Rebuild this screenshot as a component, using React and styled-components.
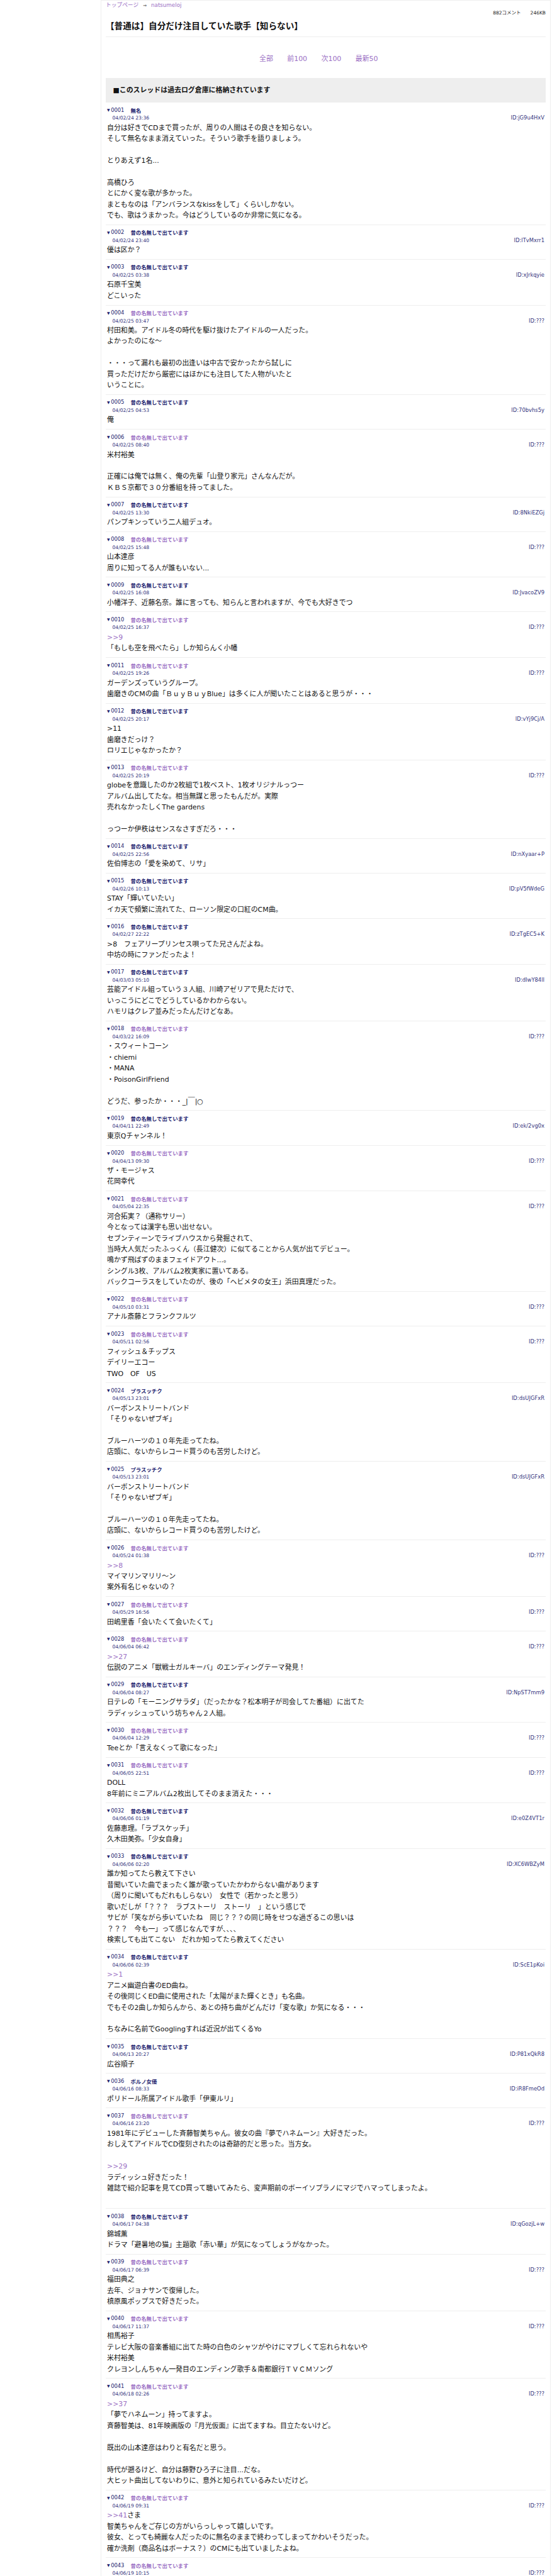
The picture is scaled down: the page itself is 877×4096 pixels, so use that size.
import React from 'react';
import styled, { createGlobalStyle } from 'styled-components';

const Global = createGlobalStyle`
  html, body {
    margin: 0;
    padding: 0;
    background: #fff;
  }
  body {
    font-family: "DejaVu Sans", "Noto Sans CJK JP", sans-serif;
    color: #111;
  }
`

const Clip = styled.div`
  height: 4096px;
  overflow: hidden;
`

const Page = styled.div`
  box-sizing: border-box;
  width: 715px;
  margin-left: 160px;
  padding: 0 7px;
  border: 1px solid #eee;
  border-bottom: none;
`

const Crumbs = styled.div`
  height: 14px;
  font-size: 8.73px;
  line-height: 14px;
  color: #333;
`

const Crumb = styled.a`
  color: #9b6fc4;
  text-decoration: none;
`

const Arrow = styled.span`
  margin: 0 7px;
  font-size: 7px;
`

const Meta = styled.div`
  display: flex;
  justify-content: flex-end;
  gap: 15px;
  font-size: 7.5px;
  line-height: 12px;
  color: #222;
`

const Title = styled.h1`
  margin: 0;
  padding: 6px 0 9px 0;
  font-size: 13.64px;
  line-height: 16px;
  font-weight: bold;
  color: #111;
  border-bottom: 1px solid #eee;
`

const Nav = styled.nav`
  display: flex;
  justify-content: center;
  height: 65px;
  align-items: center;
  font-size: 10.91px;
`

const NavLink = styled.a`
  margin-right: 22.5px;
  color: #9b6fc4;
  text-decoration: none;
`

const Banner = styled.div`
  box-sizing: border-box;
  height: 39px;
  padding-left: 11.5px;
  background: #eee;
  font-size: 10.91px;
  font-weight: bold;
  line-height: 39px;
  color: #111;
`

const PostBox = styled.article`
  padding: 5px 2px 5.2px;
  border-bottom: 1px solid #eee;
`

const PostHead = styled.div`
  display: flex;
  align-items: center;
  height: 13px;
  font-size: 8.4px;
  color: #1d1d6e;
`

const Marker = styled.span`
  font-size: 6px;
  margin-right: 1.5px;
`

const PostNo = styled.span`
  margin-right: 10px;
`

const Name = styled.span`
  font-weight: bold;
  color: ${(p) => (p.$mail ? '#9b6fc4' : '#1d1d6e')};
`

const PostMeta = styled.div`
  display: flex;
  justify-content: space-between;
  height: 13.5px;
  padding-left: 8.5px;
  line-height: 13.5px;
  color: #33337d;
`

const PostDate = styled.span`
  font-size: 7.64px;
`

const PostId = styled.span`
  font-size: 8.4px;
`

const Body = styled.div`
  font-size: 10.91px;
  line-height: 17.46px;
`

const Line = styled.div`
  min-height: 17.46px;
  white-space: pre;
`

const Anchor = styled.a`
  color: #9b6fc4;
  text-decoration: none;
`

const NANASHI = '昔の名無しで出ています'

const posts = [
  ['無名', 0, '04/02/24 23:36', 'jG9u4HxV', ['自分は好きでCDまで買ったが、周りの人間はその良さを知らない。', 'そして無名なまま消えていった。そういう歌手を語りましょう。', '', 'とりあえず1名...', '', '高橋ひろ', 'とにかく変な歌が多かった。', 'まともなのは「アンバランスなkissをして」くらいしかない。', 'でも、歌はうまかった。今はどうしているのか非常に気になる。']],
  [NANASHI, 0, '04/02/24 23:40', 'lTvMxrr1', ['優は区か？']],
  [NANASHI, 0, '04/02/25 03:38', 'xJrkqyie', ['石原千宝美', 'どこいった']],
  [NANASHI, 1, '04/02/25 03:47', '???', ['村田和美。アイドル冬の時代を駆け抜けたアイドルの一人だった。', 'よかったのにな～', '', '・・・って漏れも最初の出逢いは中古で安かったから試しに', '買っただけだから厳密にはほかにも注目してた人物がいたと', 'いうことに。']],
  [NANASHI, 0, '04/02/25 04:53', '70bvhs5y', ['俺']],
  [NANASHI, 1, '04/02/25 08:40', '???', ['米村裕美', '', '正確には俺では無く、俺の先輩「山登り家元」さんなんだが。', 'ＫＢＳ京都で３０分番組を持ってました。']],
  [NANASHI, 0, '04/02/25 13:30', '8NkiEZGj', ['パンプキンっていう二人組デュオ。']],
  [NANASHI, 1, '04/02/25 15:48', '???', ['山本達彦', '周りに知ってる人が誰もいない...']],
  [NANASHI, 0, '04/02/25 16:08', 'JvacoZV9', ['小幡洋子、近藤名奈。誰に言っても、知らんと言われますが、今でも大好きでつ']],
  [NANASHI, 1, '04/02/25 16:37', '???', ['>>9', '「もしも空を飛べたら」しか知らんく小幡']],
  [NANASHI, 1, '04/02/25 19:26', '???', ['ガーデンズっていうグループ。', '歯磨きのCMの曲「ＢｕｙＢｕｙBlue」は多くに人が聞いたことはあると思うが・・・']],
  [NANASHI, 0, '04/02/25 20:17', 'vYj9Cj/A', ['>11', '歯磨きだっけ？', 'ロリエじゃなかったか？']],
  [NANASHI, 1, '04/02/25 20:19', '???', ['globeを意識したのか2枚組で1枚ベスト、1枚オリジナルっつー', 'アルバム出してたな。相当無謀と思ったもんだが。実際', '売れなかったしくThe gardens', '', 'っつーか伊秩はセンスなさすぎだろ・・・']],
  [NANASHI, 0, '04/02/25 22:56', 'nXyaar+P', ['佐伯博志の「愛を染めて、リサ」']],
  [NANASHI, 0, '04/02/26 10:13', 'pV5fWdeG', ['STAY「輝いていたい」', 'イカ天で頻繁に流れてた、ローソン限定の口紅のCM曲。']],
  [NANASHI, 0, '04/02/27 22:22', 'zTgEC5+K', ['>8　フェアリープリンセス唄ってた兄さんだよね。', '中坊の時にファンだったよ！']],
  [NANASHI, 0, '04/03/03 05:10', 'dIwY84lI', ['芸能アイドル組っていう３人組、川崎アゼリアで見ただけで、', 'いっこうにどこでどうしているかわからない。', 'ハモリはクレア並みだったんだけどなあ。']],
  [NANASHI, 1, '04/03/22 16:09', '???', ['・スウィートコーン', '・chiemi', '・MANA', '・PoisonGirlFriend', '', 'どうだ、参ったか・・・_|￣|○']],
  [NANASHI, 0, '04/04/11 22:49', 'ek/2vg0x', ['東京Qチャンネル！']],
  [NANASHI, 1, '04/04/13 09:30', '???', ['ザ・モージャス', '花岡幸代']],
  [NANASHI, 1, '04/05/04 22:35', '???', ['河合拓実？（通称サリー）', '今となっては漢字も思い出せない。', 'セブンティーンでライブハウスから発掘されて、', '当時大人気だったふっくん（長江健次）に似てることから人気が出てデビュー。', '鳴かず飛ばずのままフェイドアウト...。', 'シングル3枚、アルバム2枚実家に置いてある。', 'バックコーラスをしていたのが、後の「ヘビメタの女王」浜田真理だった。']],
  [NANASHI, 1, '04/05/10 03:31', '???', ['アナル斎藤とフランクフルツ']],
  [NANASHI, 1, '04/05/11 02:56', '???', ['フィッシュ＆チップス', 'デイリーエコー', 'TWO　OF　US']],
  ['プラスッチク', 0, '04/05/13 23:01', 'dsUJGFxR', ['バーボンストリートバンド', '「そりゃないぜブギ」', '', 'ブルーハーツの１０年先走ってたね。', '店頭に、ないからレコード買うのも苦労したけど。']],
  ['プラスッチク', 0, '04/05/13 23:01', 'dsUJGFxR', ['バーボンストリートバンド', '「そりゃないぜブギ」', '', 'ブルーハーツの１０年先走ってたね。', '店頭に、ないからレコード買うのも苦労したけど。']],
  [NANASHI, 1, '04/05/24 01:38', '???', ['>>8', 'マイマリンマリリ～ン', '案外有名じゃないの？']],
  [NANASHI, 1, '04/05/29 16:56', '???', ['田嶋里香「会いたくて会いたくて」']],
  [NANASHI, 1, '04/06/04 06:42', '???', ['>>27', '伝説のアニメ「獣戦士ガルキーバ」のエンディングテーマ発見！']],
  [NANASHI, 0, '04/06/04 08:27', 'NpST7mm9', ['日テレの「モーニングサラダ」（だったかな？松本明子が司会してた番組）に出てた', 'ラディッシュっていう坊ちゃん２人組。']],
  [NANASHI, 1, '04/06/04 12:29', '???', ['Teeとか「言えなくって歌になった」']],
  [NANASHI, 1, '04/06/05 22:51', '???', ['DOLL', '8年前にミニアルバム2枚出してそのまま消えた・・・']],
  [NANASHI, 0, '04/06/06 01:19', 'e0Z4VT1r', ['佐藤恵理。「ラブスケッチ」', '久木田美弥。「少女自身」']],
  [NANASHI, 0, '04/06/06 02:20', 'XC6WBZyM', ['誰か知ってたら教えて下さい', '昔聞いていた曲でまったく誰が歌っていたかわからない曲があります', '（周りに聞いてもだれもしらない）　女性で（若かったと思う）', '歌いだしが「？？？　ラブストーリ　ストーリ　」という感じで', 'サビが「笑ながら歩いていたね　同じ？？？の同じ時をせつな過ぎるこの思いは', '？？？　今も一」って感じなんですが、、、、', '検索しても出てこない　だれか知ってたら教えてください']],
  [NANASHI, 0, '04/06/06 02:39', 'ScE1pKoi', ['>>1', 'アニメ幽遊白書のED曲ね。', 'その後同じくED曲に使用された「太陽がまた輝くとき」も名曲。', 'でもその2曲しか知らんから、あとの持ち曲がどんだけ「変な歌」か気になる・・・', '', 'ちなみに名前でGooglingすれば近況が出てくるYo']],
  [NANASHI, 0, '04/06/13 20:27', 'P81xQkR8', ['広谷順子']],
  ['ポルノ女優', 0, '04/06/16 08:33', 'iR8FmeOd', ['ポリドール所属アイドル歌手「伊東ルリ」']],
  [NANASHI, 1, '04/06/16 23:20', '???', ['1981年にデビューした斉藤智美ちゃん。彼女の曲『夢でハネムーン』大好きだった。', 'おしえてアイドルでCD復刻されたのは奇跡的だと思った。当方女。', '', '>>29', 'ラディッシュ好きだった！', '雑誌で紹介記事を見てCD買って聴いてみたら、変声期前のボーイソプラノにマジでハマってしまったよ。', '']],
  [NANASHI, 0, '04/06/17 04:38', 'qGozjL+w', ['錦城薫', 'ドラマ「避暑地の猫」主題歌「赤い華」が気になってしょうがなかった。']],
  [NANASHI, 1, '04/06/17 06:39', '???', ['福田典之', '去年、ジョナサンで復帰した。', '槙原風ポップスで好きだった。']],
  [NANASHI, 1, '04/06/17 11:37', '???', ['相馬裕子', 'テレビ大阪の音楽番組に出てた時の白色のシャツがやけにマブしくて忘れられないや', '米村裕美', 'クレヨンしんちゃん一発目のエンディング歌手＆南都銀行ＴＶＣＭソング']],
  [NANASHI, 1, '04/06/18 02:26', '???', ['>>37', '「夢でハネムーン」持ってますよ。', '斉藤智美は、81年映画版の『月光仮面』に出てますね。目立たないけど。', '', '既出の山本達彦はわりと有名だと思う。', '', '時代が遡るけど、自分は藤野ひろ子に注目...だな。', '大ヒット曲出してないわりに、意外と知られているみたいだけど。']],
  [NANASHI, 1, '04/06/19 09:31', '???', ['>>41さま', '智美ちゃんをご存じの方がいらっしゃって嬉しいです。', '彼女、とっても綺麗な人だったのに無名のままで終わってしまってかわいそうだった。', '確か洗剤（商品名はボーナス？）のCMにも出ていましたよね。']],
  [NANASHI, 1, '04/06/19 10:15', '???', ['']],
]

// ">>9" 形式のレスアンカーだけリンク色にする
const renderLine = (text) => {
  const m = text.match(/^(>>\d+)(.*)$/)
  if (!m) return text
  return (
    <>
      <Anchor href="#">{m[1]}</Anchor>
      {m[2]}
    </>
  )
}

const Post = ({ no, name, mail, date, id, lines }) => (
  <PostBox>
    <PostHead>
      <Marker>▼</Marker>
      <PostNo>{String(no).padStart(4, '0')}</PostNo>
      <Name $mail={mail}>{name}</Name>
    </PostHead>
    <PostMeta>
      <PostDate>{date}</PostDate>
      <PostId>ID:{id}</PostId>
    </PostMeta>
    <Body>
      {lines.map((text, i) => (
        <Line key={i}>{renderLine(text)}</Line>
      ))}
    </Body>
  </PostBox>
)

const App = () => (
  <Clip>
    <Global />
    <Page>
      <Crumbs>
        <Crumb href="#">トップページ</Crumb>
        <Arrow>⇒</Arrow>
        <Crumb href="#">natsumeloj</Crumb>
      </Crumbs>
      <Meta>
        <span>882コメント</span>
        <span>246KB</span>
      </Meta>
      <Title>【普通は】自分だけ注目していた歌手【知らない】</Title>
      <Nav>
        <NavLink href="#">全部</NavLink>
        <NavLink href="#">前100</NavLink>
        <NavLink href="#">次100</NavLink>
        <NavLink href="#">最新50</NavLink>
      </Nav>
      <Banner>■このスレッドは過去ログ倉庫に格納されています</Banner>
      {posts.map(([name, mail, date, id, lines], i) => (
        <Post key={i} no={i + 1} name={name} mail={!!mail} date={date} id={id} lines={lines} />
      ))}
    </Page>
  </Clip>
)

export default App
